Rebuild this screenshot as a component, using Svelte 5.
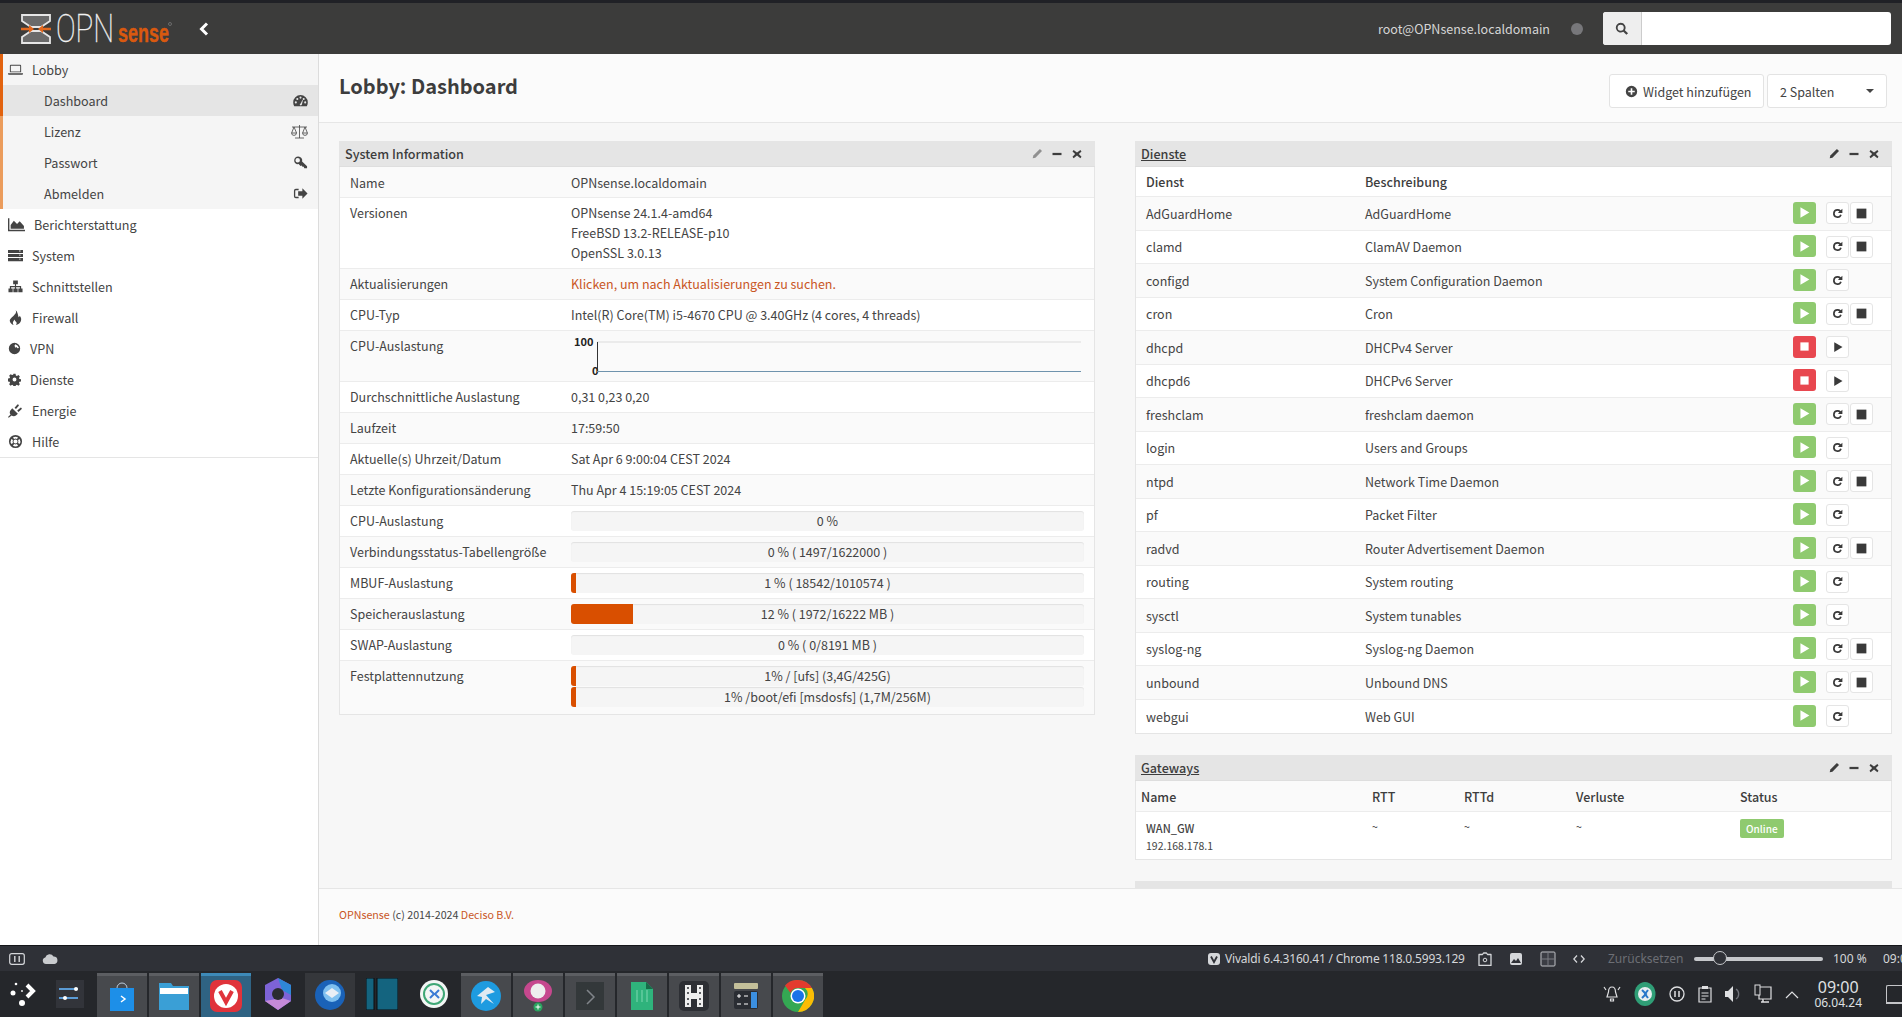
<script>
  // Sidebar data: w is the icon box width, it also decides where the label starts
  const lobbyItems = [
    { label: 'Dashboard', icon: 'gauge', active: true },
    { label: 'Lizenz', icon: 'scale' },
    { label: 'Passwort', icon: 'key' },
    { label: 'Abmelden', icon: 'signout' }
  ];
  const menuItems = [
    { label: 'Berichterstattung', icon: 'area', w: 16 },
    { label: 'System', icon: 'server', w: 14 },
    { label: 'Schnittstellen', icon: 'sitemap', w: 14 },
    { label: 'Firewall', icon: 'fire', w: 14 },
    { label: 'VPN', icon: 'globe', w: 12 },
    { label: 'Dienste', icon: 'cog', w: 12 },
    { label: 'Energie', icon: 'plug', w: 14 },
    { label: 'Hilfe', icon: 'lifebuoy', w: 14 }
  ];

  const sysRows = [
    { label: 'Name', lines: ['OPNsense.localdomain'] },
    { label: 'Versionen', lines: ['OPNsense 24.1.4-amd64', 'FreeBSD 13.2-RELEASE-p10', 'OpenSSL 3.0.13'] },
    { label: 'Aktualisierungen', link: 'Klicken, um nach Aktualisierungen zu suchen.' },
    { label: 'CPU-Typ', lines: ['Intel(R) Core(TM) i5-4670 CPU @ 3.40GHz (4 cores, 4 threads)'] },
    { label: 'CPU-Auslastung', chart: true },
    { label: 'Durchschnittliche Auslastung', lines: ['0,31 0,23 0,20'] },
    { label: 'Laufzeit', lines: ['17:59:50'] },
    { label: 'Aktuelle(s) Uhrzeit/Datum', lines: ['Sat Apr 6 9:00:04 CEST 2024'] },
    { label: 'Letzte Konfigurationsänderung', lines: ['Thu Apr 4 15:19:05 CEST 2024'] },
    { label: 'CPU-Auslastung', bars: [{ pct: 0, text: '0 %' }] },
    { label: 'Verbindungsstatus-Tabellengröße', bars: [{ pct: 0, text: '0 % ( 1497/1622000 )' }] },
    { label: 'MBUF-Auslastung', bars: [{ pct: 1, text: '1 % ( 18542/1010574 )' }] },
    { label: 'Speicherauslastung', bars: [{ pct: 12, text: '12 % ( 1972/16222 MB )' }] },
    { label: 'SWAP-Auslastung', bars: [{ pct: 0, text: '0 % ( 0/8191 MB )' }] },
    { label: 'Festplattennutzung', bars: [{ pct: 1, text: '1% / [ufs] (3,4G/425G)' }, { pct: 1, text: '1% /boot/efi [msdosfs] (1,7M/256M)' }] }
  ];

  const services = [
    ['AdGuardHome', 'AdGuardHome', 'full'],
    ['clamd', 'ClamAV Daemon', 'full'],
    ['configd', 'System Configuration Daemon', 'restart'],
    ['cron', 'Cron', 'full'],
    ['dhcpd', 'DHCPv4 Server', 'down'],
    ['dhcpd6', 'DHCPv6 Server', 'down'],
    ['freshclam', 'freshclam daemon', 'full'],
    ['login', 'Users and Groups', 'restart'],
    ['ntpd', 'Network Time Daemon', 'full'],
    ['pf', 'Packet Filter', 'restart'],
    ['radvd', 'Router Advertisement Daemon', 'full'],
    ['routing', 'System routing', 'restart'],
    ['sysctl', 'System tunables', 'restart'],
    ['syslog-ng', 'Syslog-ng Daemon', 'full'],
    ['unbound', 'Unbound DNS', 'full'],
    ['webgui', 'Web GUI', 'restart']
  ];

  const dot = (x, y, r) => `M${x - r} ${y}a${r} ${r} 0 1 0 ${2 * r} 0a${r} ${r} 0 1 0 ${-2 * r} 0z`;

  const icons = {
    laptop: 'M3 3h10a1 1 0 0 1 1 1v7H2V4a1 1 0 0 1 1-1zM3 4v6h10V4zM0 12h16v.5a1 1 0 0 1-1 1H1a1 1 0 0 1-1-1z',
    gauge: 'M8 2.2A7.8 7.8 0 0 0 .2 10c0 1.5.4 2.8 1.1 4h13.4c.7-1.2 1.1-2.5 1.1-4A7.8 7.8 0 0 0 8 2.2z' + dot(3, 10, 1.1) + dot(4.6, 6.4, 1.1) + dot(8, 4.9, 1.1) + dot(13, 10, 1.1) + dot(11.4, 6.4, 1.1) + 'M7.2 12.6a1.4 1.4 0 0 0 2.2 0L10.6 7.6 10 7.4 8.2 11.2a1.4 1.4 0 0 0-1 1.4z',
    key: 'M5.5 1.5a4.3 4.3 0 0 0-1.2 8.4L6 9.6l2 2 1.5-.5.5 1.5 1.5-.2.5 1.6h3v-2L9.7 7A4.3 4.3 0 0 0 5.5 1.5zM5 3.3a2.4 2.4 0 1 1 0 4.8 2.4 2.4 0 0 1 0-4.8z',
    signout: 'M6 3H3a2 2 0 0 0-2 2v6a2 2 0 0 0 2 2h3v-1.5H3a.6.6 0 0 1-.6-.6V5.100a.6.600 0 0 1 .6-.6h3zM10 2.500 15.500 8 10 13.500V10.500H5.500v-5H10z',
    area: 'M0 2h1.300v11H16v1.300H0zM2.500 12V8.500L5.500 4.500l3 3 2.500-2.500 4 4.500V12z',
    server: 'M0 2h16v3.400H0zM12 3.200a.7.7 0 1 0 1.400 0 .7.7 0 0 0-1.400 0zM0 6.300h16v3.400H0zM12 7.500a.7.7 0 1 0 1.400 0 .7.7 0 0 0-1.400 0zM0 10.600h16V14H0zM12 11.800a.7.7 0 1 0 1.400 0 .7.7 0 0 0-1.400 0z',
    sitemap: 'M5.500 1.500h5v4H8.600v2h5.400v2.500h1.500v4h-4.500v-4h1.700V8.700H8.600v1.300h1.700v4H5.700v-4h1.700V8.700H3.300v1.300H5v4H.500v-4H2V7.500h5.400v-2H5.500z',
    fire: 'M8 0c1.500 2.500 0 4-2 6S1.500 9.500 2 12c.4 2 2 3.400 4 4-1.200-1.800-1.200-3.500 1-6 .3 1.300 1 1.800 1.800 2.800.7 1 .5 2.200-.3 3.200 3-.5 6-3 5.500-7-.2-1.300-.8-2.300-1.500-3-.2 1-.6 1.500-1.200 1.800C10.500 5 10.500 2 8 0z',
    globe: 'M8 1a7 7 0 1 0 0 14A7 7 0 0 0 8 1zM9 2.800l3 1.700 1.500 3-2 .2-1-1.500L9 7 8 4.500z',
    cog: 'M6.700 1h2.600l.4 2 1.300.6 1.800-1.100 1.800 1.800-1.100 1.800.6 1.300 2 .4v2.600l-2 .4-.6 1.300 1.100 1.800-1.800 1.800-1.800-1.100-1.300.6-.4 2H6.700l-.4-2-1.300-.6-1.800 1.100-1.800-1.800 1.100-1.800-.6-1.300-2-.4V6.800l2-.4.6-1.300-1.100-1.800 1.800-1.800 1.800 1.100 1.300-.6zM8 5.600a2.400 2.400 0 1 0 0 4.800 2.400 2.400 0 0 0 0-4.800z',
    plug: 'M4.500 5.500l6 6L8.800 13c-1.500 1.400-3.500 1.500-5 .3L.8 15.800 0 15l2.700-2.700C1.500 10.800 1.600 8.800 3 7.500zM7 5l2.800-3.200a1 1 0 0 1 1.500 1.400L8.500 6.400zM9.800 8l3.200-2.800a1 1 0 0 1 1.400 1.500L11.200 9.500z',
    lifebuoy: 'M8 1a7 7 0 1 0 0 14A7 7 0 0 0 8 1zM8 2.800c1 0 1.900.3 2.700.8L9.500 5.300a3 3 0 0 0-3 0L5.300 3.600C6.100 3.100 7 2.800 8 2.800zM3.600 5.300l1.700 1.200a3 3 0 0 0 0 3L3.600 10.700a5.200 5.200 0 0 1 0-5.400zM12.400 5.300a5.200 5.200 0 0 1 0 5.400l-1.700-1.200a3 3 0 0 0 0-3zM6.500 10.700a3 3 0 0 0 3 0l1.200 1.700a5.200 5.200 0 0 1-5.400 0z' + dot(8, 8, 2.2),
    search: 'M6.500 1a5.500 5.500 0 1 0 3 10.100l3.500 3.600 1.900-1.900-3.600-3.500A5.500 5.500 0 0 0 6.500 1zM6.500 3a3.500 3.500 0 1 1 0 7 3.500 3.500 0 0 1 0-7z',
    plus: 'M8 1a7 7 0 1 0 0 14A7 7 0 0 0 8 1zM7 4h2v3h3v2H9v3H7V9H4V7h3z',
    pencil: 'M11.500 1.500l3 3-9.500 9.500L1 15l1-4z',
    minus: 'M2 6.500h12v3H2z',
    close: 'M3.500 2.500 8 6l4.500-3.500 1.500 2L10.500 8l3.500 3.500-1.500 2L8 10l-4.500 3.500-1.500-2L5.500 8 2 4.500z',
    play: 'M3 1.500 14 8 3 14.500z',
    stop: 'M2 2h12v12H2z',
    redo: 'M8 2.500a5.500 5.500 0 1 0 5.200 7.300l-2-.7A3.400 3.400 0 1 1 8 4.600c.9 0 1.700.3 2.300 1L8.500 7.500H14V2l-2 2a5.500 5.500 0 0 0-4-1.500z'
  };
</script>

{#snippet ico(name, size = 14)}
  <svg class="ico" width={size} height={size} viewBox="0 0 16 16" aria-hidden="true"><path d={icons[name]} fill-rule="evenodd" fill="currentColor" /></svg>
{/snippet}

{#snippet widgetHead(title, linked, dim)}
  <div class="w-head">
    <span class:linked>{title}</span>
    <div class="w-tools">
      <span class:dim>{@render ico('pencil', 11)}</span>
      {@render ico('minus', 12)}
      {@render ico('close', 12)}
    </div>
  </div>
{/snippet}

<div class="screen">
  <header class="topbar">
    <div class="brand">
      <svg width="156" height="34" viewBox="0 0 156 34" aria-label="OPNsense">
        <path d="M1 3h28v6l-9 6h-10L1 9zM1 31h28v-6l-9-6h-10l-9 6z" fill="#6a6a6a" stroke="#e6e6e6" stroke-width="1.800" />
        <path d="M0 17h10M30 17H20" stroke="#e2681e" stroke-width="2.500" />
        <path d="M8 13l5 4-5 4zM22 13l-5 4 5 4z" fill="#e2681e" />
        <text x="35" y="30" class="logo-opn" textLength="58" lengthAdjust="spacingAndGlyphs">OPN</text>
        <text x="97" y="30" class="logo-sense" textLength="51" lengthAdjust="spacingAndGlyphs">sense</text>
        <circle cx="149" cy="12" r="1.500" fill="none" stroke="#8a8a8a" stroke-width=".6" />
      </svg>
      <svg class="chevron" width="10" height="14" viewBox="0 0 10 14"><path d="M8 1.500 2.500 7 8 12.500" fill="none" stroke="#fff" stroke-width="3" /></svg>
    </div>
    <div class="top-right">
      <span class="user">root@OPNsense.localdomain</span>
      <span class="status-dot"></span>
      <div class="search">
        <span class="search-addon">{@render ico('search', 14)}</span>
        <span class="search-input"></span>
      </div>
    </div>
  </header>

  <div class="body">
    <nav class="sidebar">
      <div class="lobby">
        <div class="nav-item">{@render ico('laptop', 15)}<span>Lobby</span></div>
        {#each lobbyItems as item}
          <div class="sub-item" class:active={item.active}>
            <span>{item.label}</span>
            {#if item.icon === 'scale'}
              <svg class="ico" width="17" height="14" viewBox="0 0 17 14" aria-hidden="true"><path d="M8.500 0v13M4 13h9M1 2h15M3 2 .6 8h5zM14 2l-2.400 6h4.800zM.6 8a2.400 2.400 0 0 0 4.800 0M11.600 8a2.400 2.400 0 0 0 4.800 0" fill="none" stroke="currentColor" stroke-width=".8" /></svg>
            {:else}
              {@render ico(item.icon, 15)}
            {/if}
          </div>
        {/each}
      </div>
      {#each menuItems as item}
        <div class="nav-item">{@render ico(item.icon, item.w + 1)}<span>{item.label}</span></div>
      {/each}
    </nav>

    <main class="main">
      <div class="title-bar">
        <h1>Lobby: Dashboard</h1>
        <div class="title-actions">
          <button class="btn add">{@render ico('plus', 13)}Widget hinzufügen</button>
          <button class="btn columns"><span>2 Spalten</span><i class="caret"></i></button>
        </div>
      </div>

      <div class="content">
        <section class="widget sys">
          {@render widgetHead('System Information', false, true)}
          {#each sysRows as row, i}
            <div class="sys-row" class:odd={i % 2 === 0} class:first={i === 0} class:last={i === sysRows.length - 1}>
              <div>{row.label}</div>
              <div>
                {#if row.lines}
                  {#each row.lines as line}<div>{line}</div>{/each}
                {:else if row.link}
                  <span class="orange">{row.link}</span>
                {:else if row.chart}
                  <svg class="chart" width="512" height="40" viewBox="0 0 512 40">
                    <text x="3" y="10" class="tick">100</text>
                    <text x="21" y="39" class="tick">0</text>
                    <path d="M26 6h484" stroke="#dcdcdc" />
                    <path d="M26.500 6v29" stroke="#333" />
                    <path d="M26 35.500h484" stroke="#6f93ad" />
                  </svg>
                {:else}
                  <div class="bars">
                    {#each row.bars as bar}
                      <div class="bar">
                        <div class="bar-fill" style="width:{bar.pct}%"></div>
                        <span>{bar.text}</span>
                      </div>
                    {/each}
                  </div>
                {/if}
              </div>
            </div>
          {/each}
        </section>

        <div class="right-col">
          <section class="widget">
            {@render widgetHead('Dienste', true)}
            <div class="svc-row svc-head"><div>Dienst</div><div>Beschreibung</div></div>
            {#each services as [name, desc, state], i}
              <div class="svc-row" class:odd={i % 2 === 0}>
                <div>{name}</div>
                <div>{desc}</div>
                <div class="svc-actions">
                  {#if state === 'down'}
                    <span class="state red">{@render ico('stop', 11)}</span>
                    <span class="act">{@render ico('play', 12)}</span>
                  {:else}
                    <span class="state green">{@render ico('play', 13)}</span>
                    <span class="act">{@render ico('redo', 13)}</span>
                    {#if state === 'full'}<span class="act">{@render ico('stop', 13)}</span>{/if}
                  {/if}
                </div>
              </div>
            {/each}
          </section>

          <section class="widget">
            {@render widgetHead('Gateways', true)}
            <div class="gw-row gw-head"><div>Name</div><div>RTT</div><div>RTTd</div><div>Verluste</div><div>Status</div></div>
            <div class="gw-row gw-body">
              <div class="gw-name"><b>WAN_GW</b><small>192.168.178.1</small></div>
              <div>~</div><div>~</div><div>~</div>
              <div><span class="badge">Online</span></div>
            </div>
          </section>

          <section class="widget">
            <div class="w-head"></div>
          </section>
        </div>
      </div>

      <footer class="page-footer"><span class="orange">OPNsense</span> (c) 2014-2024 <span class="orange">Deciso B.V.</span></footer>
    </main>
  </div>

  <div class="statusbar">
    <div class="status-left">
      <svg width="16" height="12" viewBox="0 0 16 12"><rect x=".7" y=".7" width="14.600" height="10.600" rx="2" fill="none" stroke="#d5d7da" stroke-width="1.200" /><path d="M5.800 3v6M10.200 3v6" stroke="#d5d7da" stroke-width="1.400" /></svg>
      <svg width="16" height="11" viewBox="0 0 16 11"><path d="M4 11a3.300 3.300 0 0 1-.7-6.500A4.500 4.500 0 0 1 11.500 3.500 3.800 3.800 0 0 1 12.500 11z" fill="#c9cbce" /></svg>
    </div>
    <div class="status-right">
      <span class="vivaldi-mini"><svg width="12" height="12" viewBox="0 0 12 12"><rect width="12" height="12" rx="3" fill="#d5d7da" /><path d="M3 3.500 6 9l3-5.500" fill="none" stroke="#2f3137" stroke-width="1.800" /></svg></span>
      <span class="ua">Vivaldi 6.4.3160.41 / Chrome 118.0.5993.129</span>
      <svg class="s-ico" width="14" height="14" viewBox="0 0 14 14"><path d="M4.500 2.500 5.500 1h3l1 1.500H13v11H1v-11z" fill="none" stroke="#d5d7da" stroke-width="1.300" stroke-linejoin="round" /><circle cx="7" cy="8" r="1.800" fill="none" stroke="#d5d7da" /></svg>
      <svg class="s-ico" width="14" height="14" viewBox="0 0 14 14"><rect x="1" y="1" width="12" height="12" rx="2" fill="#d5d7da" /><path d="M2 11l3-4 2 2 2-3 3 5z" fill="#2f3137" /></svg>
      <svg class="s-ico" width="16" height="16" viewBox="0 0 16 16"><rect x="1" y="1" width="14" height="14" rx="1" fill="#3b3d44" stroke="#bfc1c5" /><path d="M8 1v14M1 8h14" stroke="#7b7d82" /></svg>
      <svg class="s-ico" width="12" height="10" viewBox="0 0 12 10"><path d="M4 1.500.8 5 4 8.500M8 1.500 11.200 5 8 8.500" fill="none" stroke="#d5d7da" stroke-width="1.300" /></svg>
      <span class="reset">Zurücksetzen</span>
      <div class="zoom-slider"><span class="knob"></span></div>
      <span class="zoom-val">100 %</span>
      <span class="status-clock">09:00</span>
    </div>
  </div>

  <div class="taskbar">
    <svg class="launcher" width="28" height="28" viewBox="0 0 28 28"><circle cx="5" cy="15" r="2.500" fill="#fff" /><circle cx="8" cy="6" r="1.300" fill="#fff" /><circle cx="14" cy="25" r="3" fill="#fff" /><path d="M19 7l6 6-6 6" fill="none" stroke="#fff" stroke-width="4" /><circle cx="14" cy="13" r=".9" fill="#fff" /></svg>

    <div class="tasks">
      <span class="task plain"><svg width="28" height="28" viewBox="0 0 28 28"><rect width="28" height="28" fill="#32343a" /><path d="M3 9h19M3 18h19" stroke="#5b9bd5" stroke-width="2" /><circle cx="20" cy="9" r="2" fill="#fff" /><circle cx="9" cy="18" r="2" fill="#fff" /></svg></span>
      <span class="task on"><svg width="28" height="30" viewBox="0 0 28 30"><path d="M9 7a5 5 0 0 1 10 0" fill="none" stroke="#bcd" /><path d="M2 7h24v23H2z" fill="#1d8fe8" /><path d="M13 15l4 3-4 3" fill="none" stroke="#fff" stroke-width="1.500" /></svg></span>
      <span class="task on"><svg width="32" height="28" viewBox="0 0 32 28"><path d="M1 1h12l2 3h16v24H1z" fill="#3a9fd6" /><path d="M2 6h28v6H2z" fill="#fff" /></svg></span>
      <span class="task active"><svg width="32" height="32" viewBox="0 0 32 32"><rect width="32" height="32" rx="7" fill="#e0333b" /><circle cx="16" cy="16" r="12" fill="#fff" /><path d="M10 11l6 11 6-11" fill="none" stroke="#e0333b" stroke-width="4" /></svg></span>
      <span class="task plain"><svg width="28" height="32" viewBox="0 0 28 32"><path d="M14 0l13 7v16l-13 9-13-9V7z" fill="#7d63d6" /><path d="M14 0l13 7v10l-9-5z" fill="#2f87d6" /><path d="M1 23l13 9 13-9-9-3z" fill="#c58ad8" /><circle cx="14" cy="16" r="6" fill="#2a2c31" /></svg></span>
      <span class="task dim"><svg width="32" height="32" viewBox="0 0 32 32"><circle cx="16" cy="17" r="15" fill="#1a62b8" /><circle cx="18" cy="15" r="9" fill="#7fc0f0" /><path d="M11 15l7-5 7 5-7 5z" fill="#e9eef5" /></svg></span>
      <span class="task plain"><svg width="32" height="32" viewBox="0 0 32 32"><rect width="8" height="32" fill="#14647f" stroke="#0b0d10" /><rect x="11" width="21" height="32" fill="#14647f" stroke="#0b0d10" /></svg></span>
      <span class="task plain"><svg width="30" height="30" viewBox="0 0 30 30"><circle cx="15" cy="15" r="14" fill="#f3f6f5" /><circle cx="15" cy="15" r="10" fill="none" stroke="#3fa776" stroke-width="2" /><path d="M11 11l4 4-4 4M20 11l-4 4 4 4" fill="none" stroke="#3a7bd5" stroke-width="2" /></svg></span>
      <span class="task on"><svg width="32" height="32" viewBox="0 0 32 32"><circle cx="16" cy="16" r="15" fill="#1e9be0" /><path d="M7 16l11-9 7 5-9 3 8 9-8-5-5 5 1-7z" fill="#dfeaf2" /></svg></span>
      <span class="task on"><svg width="30" height="32" viewBox="0 0 30 32"><ellipse cx="15" cy="11" rx="14" ry="11" fill="#c6488e" /><circle cx="15" cy="11" r="7.500" fill="#eee" /><circle cx="15" cy="27" r="4.500" fill="#2aa35f" /><path d="M12.500 27h5M15 24.500v5" stroke="#fff" /></svg></span>
      <span class="task on"><svg width="28" height="28" viewBox="0 0 28 28"><rect width="28" height="28" fill="#33383a" /><path d="M11 8l7 7-7 7" fill="none" stroke="#80858a" stroke-width="1.500" /></svg></span>
      <span class="task on"><svg width="22" height="28" viewBox="0 0 22 28"><path d="M0 0h15l7 7v21H0z" fill="#2fb37c" /><path d="M15 0l7 7h-7z" fill="#176b48" /><path d="M6 8v12M11 8v12M16 8v12" stroke="#7fd8b1" /></svg></span>
      <span class="task on"><svg width="30" height="30" viewBox="0 0 30 30"><rect width="30" height="30" rx="5" fill="#2d2f34" /><path d="M6 4h6v8h6V4h6v22h-6v-8h-6v8H6z" fill="#eee" /><path d="M8 7h2M8 12h2M8 18h2M8 23h2M20 7h2M20 12h2M20 18h2M20 23h2" stroke="#2d2f34" stroke-width="1.500" /></svg></span>
      <span class="task on"><svg width="24" height="26" viewBox="0 0 24 26"><rect width="24" height="6" rx="1" fill="#c4c09a" /><rect y="8" width="24" height="18" rx="2" fill="#2a2d33" /><rect x="17" y="9" width="6" height="16" fill="#3b8fe0" /><path d="M3 13h4M5 11v4M10 13h4M3 21h4M10 21h4" stroke="#fff" /></svg></span>
      <span class="task on"><svg width="32" height="32" viewBox="0 0 32 32"><circle cx="16" cy="16" r="16" fill="#34a853" /><path d="M16 0a16 16 0 0 1 13.900 8H16a8 8 0 0 0-7.500 5L3 5.500A16 16 0 0 1 16 0z" fill="#e33b2e" /><path d="M29.900 8A16 16 0 0 1 16 32l7-12a8 8 0 0 0 0-12z" fill="#fbbc04" /><circle cx="16" cy="16" r="7.500" fill="#fff" /><circle cx="16" cy="16" r="6" fill="#1a73e8" /></svg></span>
    </div>

    <div class="tray">
      <svg width="18" height="20" viewBox="0 0 18 20"><path d="M9 3c-2.500 0-3.500 2-3.500 5L4 13h10l-1.500-5c0-3-1-5-3.500-5zM7.500 15h3v2h-3zM1 3l2 3M17 3l-2 3" fill="none" stroke="#dfe0e2" stroke-width="1.200" /></svg>
      <svg width="22" height="24" viewBox="0 0 22 24"><ellipse cx="11" cy="12" rx="10.500" ry="12" fill="#2f9e76" /><circle cx="11" cy="12" r="7" fill="#e8eef0" /><path d="M8 8l4 4-4 4M14 8l-3 4 3 4" fill="none" stroke="#2877c9" stroke-width="2" /></svg>
      <svg width="16" height="16" viewBox="0 0 16 16"><circle cx="8" cy="8" r="7" fill="none" stroke="#dfe0e2" stroke-width="1.300" /><path d="M6 5v6M10 5v6" stroke="#dfe0e2" stroke-width="1.500" /></svg>
      <svg width="14" height="18" viewBox="0 0 14 18"><path d="M1 3h12v14H1z" fill="none" stroke="#dfe0e2" stroke-width="1.200" /><path d="M4 1h6v3H4z" fill="#dfe0e2" /><path d="M3.500 8h7M3.500 11h7M3.500 14h4" stroke="#dfe0e2" /></svg>
      <svg width="16" height="18" viewBox="0 0 16 18"><path d="M0 6h3l5-5v16l-5-5H0z" fill="#dfe0e2" /><path d="M11 4a6 6 0 0 1 0 10" fill="none" stroke="#70727a" stroke-width="1.300" /></svg>
      <svg width="18" height="20" viewBox="0 0 18 20"><path d="M5 3h12v12H5z" fill="none" stroke="#dfe0e2" stroke-width="1.200" /><rect x="1" y="1" width="5" height="10" fill="#25272b" stroke="#dfe0e2" /><path d="M9 15v3h4M7 18h8" stroke="#dfe0e2" stroke-width="1.500" /></svg>
      <svg width="14" height="9" viewBox="0 0 14 9"><path d="M1 8l6-6 6 6" fill="none" stroke="#dfe0e2" stroke-width="1.200" /></svg>
      <div class="clock"><b>09:00</b><span>06.04.24</span></div>
      <span class="show-desktop"></span>
    </div>
  </div>
</div>

<style>
  :global(body) {
    margin: 0;
    overflow: hidden;
  }

  .screen {
    width: 1902px;
    height: 1017px;
    display: flex;
    flex-direction: column;
    overflow: hidden;
    font-family: "Noto Sans CJK SC", "Noto Sans", sans-serif;
    font-size: 12.5px;
    color: #444;
    background: #fff;
  }

  .ico {
    display: block;
    flex: none;
  }

  /* top bar */
  .topbar {
    height: 54px;
    flex: none;
    box-sizing: border-box;
    border-top: 3px solid #202126;
    background: #3c3c3b;
    display: flex;
    justify-content: space-between;
    align-items: center;
    padding: 0 11px 0 21px;
  }

  .brand {
    display: flex;
    align-items: center;
    gap: 22px;
  }

  .logo-opn {
    font: 100 38px Roboto, sans-serif;
    fill: #f1f1f1;
    stroke: #f1f1f1;
    stroke-width: 0.4px;
  }

  .logo-sense {
    font: bold 25px "Liberation Sans", sans-serif;
    fill: #d9590f;
    stroke: #d9590f;
    stroke-width: 0.4px;
  }

  .top-right {
    display: flex;
    align-items: center;
  }

  .user {
    color: #d6d6d6;
    font-size: 12.5px;
    margin-right: 21px;
  }

  .status-dot {
    width: 12px;
    height: 12px;
    border-radius: 50%;
    background: #77777a;
    margin-right: 20px;
  }

  .search {
    display: flex;
    width: 288px;
    height: 33px;
    border-radius: 3px;
    overflow: hidden;
    background: #fff;
  }

  .search-addon {
    width: 38px;
    display: flex;
    align-items: center;
    justify-content: center;
    background: #eee;
    border-right: 1px solid #ccc;
    color: #444;
  }

  .search-input {
    flex: 1;
  }

  /* sidebar */
  .body {
    flex: 1;
    min-height: 0;
    display: flex;
  }

  .sidebar {
    width: 318px;
    flex: none;
    border-right: 1px solid #dcdcdc;
    background: #fff;
    color: #444;
    font-size: 12.6px;
  }

  .lobby {
    background: #f5f5f5;
    border-left: 3px solid #eb9c5c;
  }

  .nav-item {
    height: 31px;
    display: flex;
    align-items: center;
    gap: 9px;
    padding-left: 8px;
  }

  .lobby > .nav-item {
    padding-left: 5px;
    margin-left: -3px;
    border-left: 3px solid #e2630f;
  }

  .sidebar > .nav-item:last-child {
    border-bottom: 1px solid #e5e5e5;
  }

  .sub-item {
    height: 31px;
    display: flex;
    justify-content: space-between;
    align-items: center;
    padding: 0 10px 0 41px;
  }

  .sub-item.active {
    background: #e5e5e5;
    margin-left: -3px;
    border-left: 3px solid #e2630f;
  }

  /* main area */
  .main {
    flex: 1;
    min-width: 0;
    display: flex;
    flex-direction: column;
    background: #f7f7f7;
  }

  .title-bar {
    height: 69px;
    flex: none;
    box-sizing: border-box;
    background: #fbfbfb;
    border-bottom: 1px solid #e6e6e6;
    display: flex;
    justify-content: space-between;
    align-items: flex-start;
    padding: 20px 15px 0 20px;
  }

  h1 {
    margin: 0;
    font-size: 20px;
    line-height: 24px;
    font-weight: 600;
    color: #3d3d3d;
  }

  .title-actions {
    display: flex;
    gap: 3px;
  }

  .btn {
    height: 34px;
    box-sizing: border-box;
    border: 1px solid #e3e3e3;
    border-radius: 3px;
    background: #fff;
    color: #444;
    font: inherit;
    font-size: 12.5px;
    display: flex;
    align-items: center;
    padding: 0;
  }

  .add {
    width: 155px;
    padding-left: 15px;
    gap: 5px;
  }

  .columns {
    width: 120px;
    justify-content: space-between;
    padding: 0 12px;
  }

  .caret {
    width: 0;
    height: 0;
    border: 4px solid transparent;
    border-top-color: #444;
    border-bottom: 0;
  }

  .content {
    flex: 1;
    min-height: 0;
    overflow: hidden;
    display: grid;
    grid-template-columns: 756px 757px;
    column-gap: 40px;
    align-items: start;
    padding: 18px 0 0 20px;
  }

  .widget {
    background: #fff;
    border: 1px solid #e5e5e5;
    border-top: 0;
  }

  .right-col .widget {
    margin-bottom: 21px;
  }

  .w-head {
    height: 26px;
    box-sizing: border-box;
    margin: 0 -1px;
    background: #e5e5e5;
    border-bottom: 1px solid #dedede;
    display: flex;
    justify-content: space-between;
    align-items: center;
    padding: 0 12px 0 6px;
    font-weight: 500;
    font-size: 12.6px;
    color: #3d3d3d;
  }

  .linked {
    text-decoration: underline;
  }

  .w-tools {
    display: flex;
    align-items: center;
    gap: 8px;
  }

  .w-tools .dim {
    opacity: 0.5;
  }

  .sys-row {
    display: grid;
    grid-template-columns: 221px 1fr;
    line-height: 20px;
    padding: 5px 10px;
    border-bottom: 1px solid #ececec;
  }

  .sys-row.first {
    padding: 6px 10px 4px;
  }

  .sys-row.last {
    border-bottom: 0;
    padding-bottom: 7px;
  }

  .odd {
    background: #fafafa;
  }

  .orange {
    color: #c9561f;
  }

  .chart {
    display: block;
  }

  .tick {
    font: bold 11px "Noto Sans CJK SC", sans-serif;
    fill: #222;
  }

  .chart path {
    fill: none;
  }

  .bars {
    display: flex;
    flex-direction: column;
    gap: 1px;
  }

  .bar {
    position: relative;
    height: 20px;
    border-radius: 3px;
    background: #f5f5f5;
    box-shadow: inset 0 1px 1px rgba(0, 0, 0, 0.08);
    overflow: hidden;
    text-align: center;
  }

  .bar-fill {
    position: absolute;
    inset: 0 auto 0 0;
    background: #d94f00;
  }

  .bar span {
    position: relative;
  }

  /* services table */
  .svc-row {
    height: 33.5px;
    box-sizing: border-box;
    display: grid;
    grid-template-columns: 219px 428px 1fr;
    align-items: center;
    padding-left: 10px;
    border-bottom: 1px solid #ececec;
  }

  .svc-row:last-child {
    border-bottom: 0;
  }

  .svc-head {
    height: 30px;
    font-weight: 500;
    color: #3d3d3d;
  }

  .svc-actions {
    display: flex;
    align-items: center;
  }

  .state {
    width: 23px;
    height: 22px;
    margin-top: -1px;
    border-radius: 3px;
    display: flex;
    align-items: center;
    justify-content: center;
    color: #fff;
    margin-right: 10px;
  }

  .green {
    background: #8fca6f;
  }

  .red {
    background: #e8474f;
  }

  .act {
    width: 23px;
    height: 22px;
    box-sizing: border-box;
    margin-right: 1px;
    background: #fff;
    border: 1px solid #e5e5e5;
    border-radius: 3px;
    display: flex;
    align-items: center;
    justify-content: center;
    color: #3a3a3a;
  }

  /* gateways */
  .gw-row {
    display: grid;
    grid-template-columns: 231px 92px 112px 164px 1fr;
    padding-left: 5px;
  }

  .gw-head {
    height: 31px;
    box-sizing: border-box;
    align-items: center;
    background: #fafafa;
    border-bottom: 1px solid #ececec;
    font-weight: 500;
    color: #3d3d3d;
  }

  .gw-body {
    height: 47px;
    padding-top: 7px;
    box-sizing: border-box;
    font-size: 10.5px;
    line-height: 15px;
  }

  .gw-name {
    padding-left: 5px;
    display: flex;
    flex-direction: column;
    line-height: 18px;
  }

  .gw-name b {
    font-weight: 500;
    font-size: 11px;
  }

  .gw-name small {
    font-size: 10.5px;
  }

  .badge {
    display: inline-block;
    background: #8fca6f;
    color: #fff;
    font-weight: 500;
    font-size: 10px;
    line-height: 19px;
    padding: 0 6px;
    border-radius: 2px;
  }

  .page-footer {
    height: 57px;
    flex: none;
    box-sizing: border-box;
    background: #fbfbfb;
    border-top: 1px solid #e6e6e6;
    padding: 17px 0 0 20px;
    font-size: 10.7px;
    line-height: 18px;
  }

  /* browser status bar */
  .statusbar {
    height: 26px;
    flex: none;
    box-sizing: border-box;
    border-top: 1px solid #15161a;
    background: #2f3137;
    display: flex;
    justify-content: space-between;
    align-items: center;
    padding-left: 9px;
    color: #d5d7da;
    font-family: "Noto Sans", sans-serif;
    font-size: 12px;
  }

  .status-left {
    display: flex;
    align-items: center;
    gap: 17px;
  }

  .status-right {
    display: flex;
    align-items: center;
    width: 694px;
    box-sizing: border-box;
    overflow: hidden;
  }

  .vivaldi-mini {
    display: flex;
    margin-right: 5px;
  }

  .ua {
    width: 238px;
    white-space: nowrap;
    font-size: 12px;
    letter-spacing: -0.2px;
    margin-right: 15px;
  }

  .s-ico {
    flex: none;
    margin-right: 17px;
  }

  .reset {
    color: #6d6f75;
    width: 72px;
    margin-left: 6px;
    margin-right: 14px;
    white-space: nowrap;
  }

  .zoom-slider {
    position: relative;
    width: 129px;
    height: 4px;
    border-radius: 2px;
    background: #c6c8cc;
    margin-right: 10px;
    flex: none;
  }

  .knob {
    position: absolute;
    left: 19px;
    top: -6px;
    width: 14px;
    height: 14px;
    box-sizing: border-box;
    border-radius: 50%;
    background: #2f3137;
    border: 1px solid #c6c8cc;
  }

  .zoom-val {
    width: 50px;
    white-space: nowrap;
    flex: none;
  }

  .status-clock {
    white-space: nowrap;
  }

  /* desktop panel */
  .taskbar {
    height: 46px;
    flex: none;
    background: #25272b;
    display: flex;
    align-items: stretch;
    position: relative;
    overflow: hidden;
  }

  .launcher {
    position: absolute;
    left: 8px;
    top: 7px;
  }

  .tasks {
    display: flex;
    gap: 2px;
    margin: 2px 0 0 45px;
  }

  .task {
    width: 50px;
    display: flex;
    align-items: center;
    justify-content: center;
    box-sizing: border-box;
    padding-bottom: 2px;
    overflow: hidden;
  }

  .task.on {
    background: #47494d;
    border-top: 3px solid #5c5e62;
  }

  .task.dim {
    background: #35373b;
  }

  .task.active {
    background: #2f6383;
    border-top: 3px solid #3d8ab8;
  }

  .tray {
    margin-left: auto;
    display: flex;
    align-items: center;
    gap: 13px;
    color: #dfe0e2;
    font-family: "Noto Sans", sans-serif;
  }

  .clock {
    display: flex;
    flex-direction: column;
    align-items: center;
    margin: 0 12px 0 2px;
    line-height: 15px;
  }

  .clock b {
    font-weight: 400;
    font-size: 16px;
    line-height: 16px;
  }

  .clock span {
    font-size: 12px;
  }

  .show-desktop {
    width: 16px;
    height: 19px;
    box-sizing: border-box;
    border: 1px solid #c5c6c9;
    border-right: 0;
    border-bottom-width: 2px;
    border-radius: 2px 0 0 0;
    margin-left: -1px;
  }
</style>
